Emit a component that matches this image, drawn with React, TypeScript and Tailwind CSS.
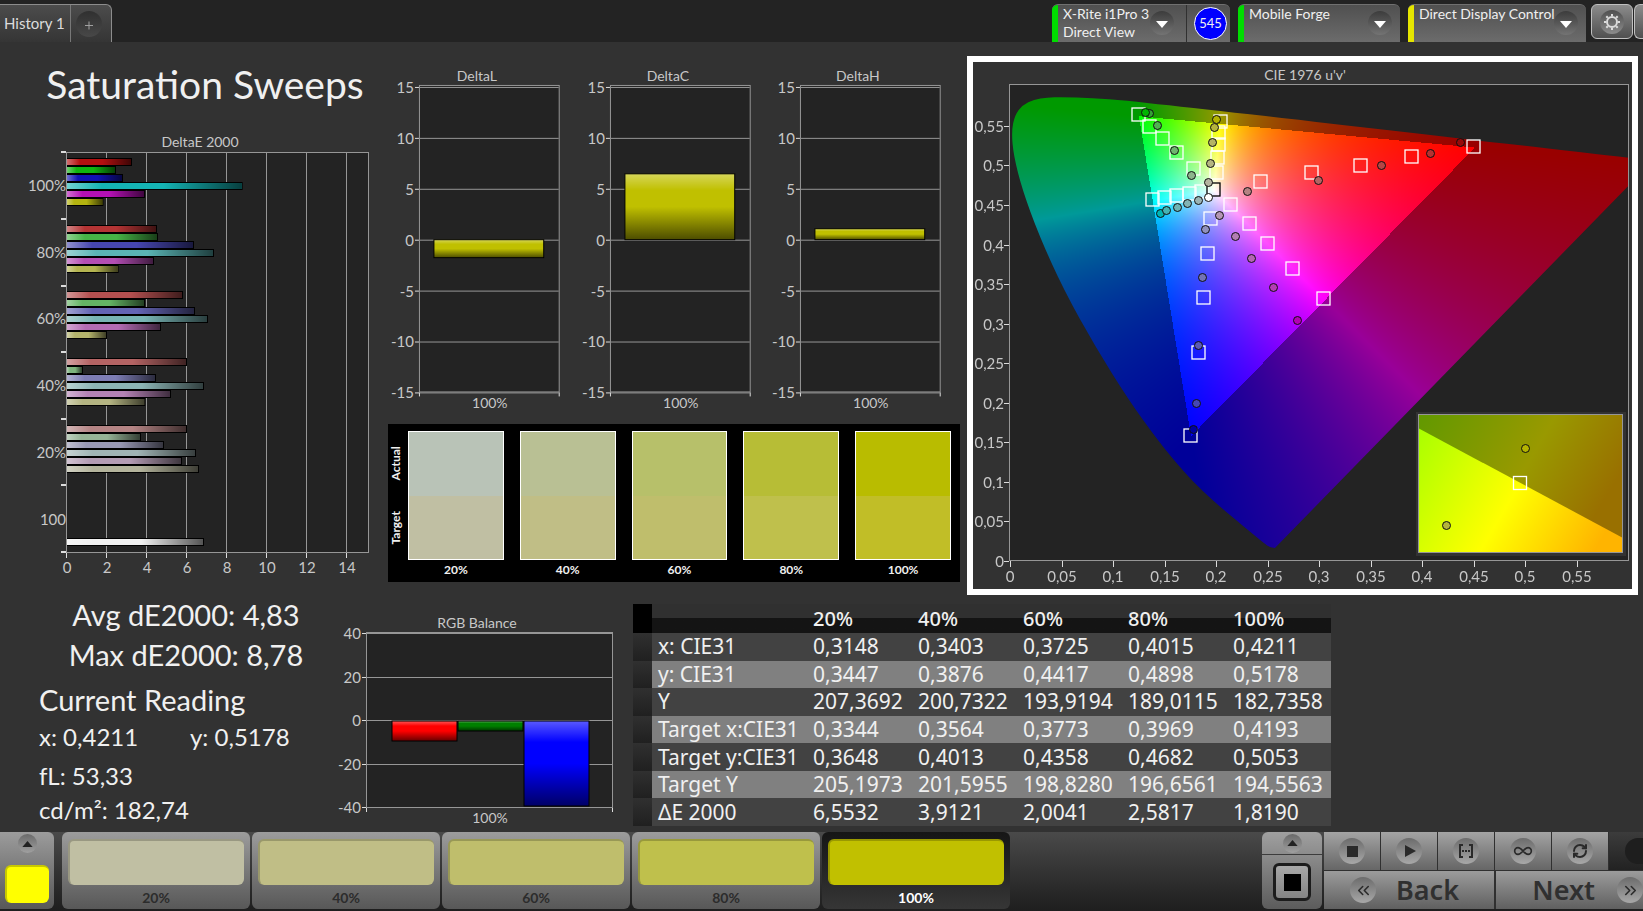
import { useEffect, useRef } from 'react';
import type { ReactNode } from 'react';
import { ChevronsLeft, ChevronsRight, Infinity as InfinityIcon, RefreshCw, Settings } from 'lucide-react';

const SATURATIONS = ['20%', '40%', '60%', '80%', '100%'];

const deltaE = [
  {
    label: '100%',
    bars: [
      { value: 3.25, color: '#b41010' },
      { value: 2.45, color: '#10b410' },
      { value: 2.8, color: '#1010b4' },
      { value: 8.78, color: '#14b4b4' },
      { value: 3.9, color: '#b410b4' },
      { value: 1.82, color: '#b4b410' },
    ],
  },
  {
    label: '80%',
    bars: [
      { value: 4.5, color: '#b43434' },
      { value: 4.55, color: '#46b446' },
      { value: 6.35, color: '#4646b0' },
      { value: 7.35, color: '#5ab4b4' },
      { value: 4.35, color: '#b44eb4' },
      { value: 2.58, color: '#b4b450' },
    ],
  },
  {
    label: '60%',
    bars: [
      { value: 5.8, color: '#b45050' },
      { value: 3.9, color: '#64b464' },
      { value: 6.4, color: '#6464b4' },
      { value: 7.05, color: '#78b4b4' },
      { value: 4.7, color: '#b46cb4' },
      { value: 2, color: '#b4b46c' },
    ],
  },
  {
    label: '40%',
    bars: [
      { value: 6, color: '#b46464' },
      { value: 0.8, color: '#7db47d' },
      { value: 4.45, color: '#7d7db4' },
      { value: 6.85, color: '#8cb4b4' },
      { value: 5.2, color: '#b482b4' },
      { value: 3.91, color: '#b4b482' },
    ],
  },
  {
    label: '20%',
    bars: [
      { value: 6, color: '#b48484' },
      { value: 3.7, color: '#96b496' },
      { value: 4.85, color: '#9898b4' },
      { value: 6.45, color: '#a0b4b4' },
      { value: 5.75, color: '#b49cb4' },
      { value: 6.6, color: '#b4b49c' },
    ],
  },
];

const swatches = [
  { label: '20%', actual: '#b9c3b7', target: '#c0bfa3' },
  { label: '40%', actual: '#b9c094', target: '#c0be86' },
  { label: '60%', actual: '#b7c06a', target: '#bfbe6c' },
  { label: '80%', actual: '#b7bd36', target: '#bfc04c' },
  { label: '100%', actual: '#b9bc00', target: '#c1be27' },
];

const patches = [
  { label: '20%', color: '#c0bfa3' },
  { label: '40%', color: '#c0be86' },
  { label: '60%', color: '#bfbe6c' },
  { label: '80%', color: '#bfc04c' },
  { label: '100%', color: '#c1c000' },
];

const rows = [
  ['x: CIE31', '0,3148', '0,3403', '0,3725', '0,4015', '0,4211'],
  ['y: CIE31', '0,3447', '0,3876', '0,4417', '0,4898', '0,5178'],
  ['Y', '207,3692', '200,7322', '193,9194', '189,0115', '182,7358'],
  ['Target x:CIE31', '0,3344', '0,3564', '0,3773', '0,3969', '0,4193'],
  ['Target y:CIE31', '0,3648', '0,4013', '0,4358', '0,4682', '0,5053'],
  ['Target Y', '205,1973', '201,5955', '198,8280', '196,6561', '194,5563'],
  ['ΔE 2000', '6,5532', '3,9121', '2,0041', '2,5817', '1,8190'],
];

// Spectral locus, CIE 1931 x,y
const locus = [
  [0.1741, 0.005], [0.1714, 0.0051], [0.1689, 0.0069], [0.1644, 0.0109], [0.1566, 0.0177],
  [0.151, 0.0227], [0.144, 0.0297], [0.1355, 0.0399], [0.1241, 0.0578], [0.1096, 0.0868],
  [0.0913, 0.1327], [0.0687, 0.2007], [0.0454, 0.295], [0.0235, 0.4127], [0.0082, 0.5384],
  [0.0039, 0.6548], [0.0139, 0.7502], [0.0389, 0.812], [0.0743, 0.8338], [0.1142, 0.8262],
  [0.1547, 0.8059], [0.2296, 0.7543], [0.3016, 0.6923], [0.3731, 0.6245], [0.4441, 0.5547],
  [0.5125, 0.4866], [0.5752, 0.4242], [0.627, 0.3725], [0.6658, 0.334], [0.6915, 0.3083],
  [0.719, 0.2809], [0.7347, 0.2653],
];

// Marker centres in chart units
const targets = [
  [165, 52], [176, 64], [189, 76], [203, 90], [220, 106],
  [247, 59], [245, 70], [245, 82], [244, 95], [243, 110],
  [179, 137], [191, 135], [203, 133], [216, 131], [228, 129],
  [287, 119], [338, 110], [387, 103], [438, 94], [500, 84],
  [257, 142], [276, 161], [294, 181], [319, 206], [350, 236],
  [237, 156], [234, 191], [230, 235], [225, 290], [217, 373],
];

const readings: [number, number, string][] = [
  [176, 51, '#35a035'], [172, 50, '#00b400'], [184, 63, '#50b450'], [201, 88, '#6eb46e'], [218, 113, '#8cb48c'],
  [243, 57, '#b4b400'], [241, 65, '#b4b43c'], [239, 80, '#b4b464'], [237, 101, '#b4b482'], [235, 120, '#b4b4a0'],
  [187, 151, '#00b4b4'], [193, 148, '#46b4b4'], [204, 145, '#6eb4b4'], [214, 141, '#82b4b4'], [225, 138, '#9ab4b4'],
  [274, 129, '#b48282'], [345, 118, '#b46464'], [408, 103, '#b44646'], [457, 91, '#b43232'], [487, 80, '#960a0a'],
  [246, 153, '#b496b4'], [262, 174, '#b47db4'], [278, 196, '#b464b4'], [300, 225, '#b43cb4'], [324, 258, '#b400b4'],
  [232, 167, '#9191be'], [229, 215, '#7373b4'], [225, 283, '#5a5ab4'], [223, 341, '#4646b4'], [220, 367, '#0000a0'],
  [235, 135, '#ffffff'],
];

const U_MAX = 0.6;
const V_MAX = 0.602;

function Chromaticity() {
  const ref = useRef<HTMLCanvasElement>(null);

  useEffect(() => {
    const canvas = ref.current;
    const ctx = canvas?.getContext('2d');
    if (!canvas || !ctx) return;
    const { width, height } = canvas;
    const image = ctx.createImageData(width, height);
    for (let j = 0; j < height; j++) {
      for (let i = 0; i < width; i++) {
        const u = ((i + 0.5) / width) * U_MAX;
        const v = (1 - (j + 0.5) / height) * V_MAX;
        const d = 6 * u - 16 * v + 12;
        const x = (9 * u) / d;
        const y = (4 * v) / d;
        const X = x / y;
        const Z = (1 - x - y) / y;
        const rgb = [
          3.2406 * X - 1.5372 - 0.4986 * Z,
          -0.9689 * X + 1.8758 + 0.0415 * Z,
          0.0557 * X - 0.204 + 1.057 * Z,
        ];
        const peak = Math.max(rgb[0], rgb[1], rgb[2]);
        const gain = Math.min(rgb[0], rgb[1], rgb[2]) < 0 ? 153 : 255;
        const p = (j * width + i) * 4;
        rgb.forEach((c, k) => {
          image.data[p + k] = gain * Math.max(0, c / peak);
        });
        image.data[p + 3] = 255;
      }
    }
    ctx.putImageData(image, 0, 0);

    // Keep only what lies inside the locus
    const points = locus.map(([x, y]) => {
      const d = -2 * x + 12 * y + 3;
      return [((4 * x) / d / U_MAX) * width, (1 - (9 * y) / d / V_MAX) * height];
    });
    ctx.globalCompositeOperation = 'destination-in';
    ctx.beginPath();
    ctx.moveTo(points[0][0], points[0][1]);
    for (let i = 1; i < points.length - 1; i++) {
      const [x, y] = points[i];
      const [nx, ny] = points[i + 1];
      ctx.quadraticCurveTo(x, y, (x + nx) / 2, (y + ny) / 2);
    }
    ctx.lineTo(points[points.length - 1][0], points[points.length - 1][1]);
    ctx.closePath();
    ctx.fill();
  }, []);

  return <canvas ref={ref} width={619} height={476} className="block w-full h-full" />;
}

function Label({ x, y, anchor = 'middle', children }: { x: number; y: number; anchor?: 'start' | 'middle' | 'end'; children: ReactNode }) {
  return (
    <text x={x} y={y} textAnchor={anchor} className="fill-[#c8c8c8] text-[15px]">
      {children}
    </text>
  );
}

function Caption({ x, y, children }: { x: number; y: number; children: ReactNode }) {
  return (
    <text x={x} y={y} textAnchor="middle" className="fill-[#c8c8c8] text-[14px]">
      {children}
    </text>
  );
}

function ChartGradients() {
  return (
    <svg className="absolute w-0 h-0" aria-hidden="true">
      <defs>
        <linearGradient id="shade-x">
          <stop offset="0" stopColor="#fff" stopOpacity="0.4" />
          <stop offset="0.2" stopColor="#fff" stopOpacity="0" />
          <stop offset="0.55" stopColor="#000" stopOpacity="0" />
          <stop offset="1" stopColor="#000" stopOpacity="0.65" />
        </linearGradient>
        <linearGradient id="shade-y" x2="0" y2="1">
          <stop offset="0" stopColor="#fff" stopOpacity="0.35" />
          <stop offset="0.25" stopColor="#fff" stopOpacity="0" />
          <stop offset="0.5" stopColor="#000" stopOpacity="0" />
          <stop offset="1" stopColor="#000" stopOpacity="0.6" />
        </linearGradient>
      </defs>
    </svg>
  );
}

function DeltaEChart() {
  const px = (value: number) => 67 + value * 20;
  return (
    <svg viewBox="0 0 388 456" className="w-full overflow-visible" role="img" aria-label="DeltaE 2000">
      <Caption x={200} y={17}>DeltaE 2000</Caption>
      <rect x="67" y="22" width="301" height="400" fill="#232323" />
      {[2, 4, 6, 8, 10, 12, 14].map((tick) => (
        <rect key={tick} x={px(tick) - 1} y="22" width="1" height="400" fill="#969696" />
      ))}
      {[0, 2, 4, 6, 8, 10, 12, 14].map((tick) => (
        <g key={tick}>
          <rect x={px(tick) - 1} y="422" width="1" height="6" fill="#dcdcdc" />
          <Label x={px(tick)} y={443}>{tick}</Label>
        </g>
      ))}
      <rect x="66.5" y="22.5" width="302" height="400" fill="none" stroke="#969696" />
      {[22, 89, 156, 222, 289, 355, 422].map((y) => (
        <rect key={y} x="61" y={y - 1} width="5" height="2" fill="#dcdcdc" />
      ))}
      {deltaE.map((group, g) => {
        const top = 28 + Math.round(g * 66.7);
        return (
          <g key={group.label}>
            <Label x={66} y={top + 33} anchor="end">{group.label}</Label>
            {group.bars.map((bar, i) => (
              <g key={bar.color}>
                <rect x="67" y={top + i * 8} width={bar.value * 20} height="8" fill="#000" />
                <rect x="67" y={top + i * 8 + 1} width={bar.value * 20 - 1} height="6" fill={bar.color} />
                <rect x="67" y={top + i * 8 + 1} width={bar.value * 20 - 1} height="6" fill="url(#shade-x)" />
              </g>
            ))}
          </g>
        );
      })}
      <Label x={66} y={395} anchor="end">100</Label>
      <rect x="67" y="408" width="137" height="8" fill="#000" />
      <rect x="67" y="409" width="136" height="6" fill="#f0f0f0" />
      <rect x="67" y="409" width="136" height="6" fill="url(#shade-x)" />
    </svg>
  );
}

function DeltaChart({ title, value }: { title: string; value: number }) {
  const py = (v: number) => 178 - v * 10.2;
  const top = Math.round(py(Math.max(value, 0)));
  const height = Math.round(Math.abs(value) * 10.2);
  return (
    <svg viewBox="0 0 191 350" className="min-w-0 flex-1 overflow-visible" role="img" aria-label={title}>
      <Caption x={89} y={19}>{title}</Caption>
      <rect x="31.5" y="23.5" width="140" height="307" fill="#232323" stroke="#969696" />
      {[15, 10, 5, 0, -5, -10, -15].map((tick) => (
        <g key={tick}>
          <rect x="32" y={Math.round(py(tick))} width="139" height="1" fill="#969696" />
          <rect x="27" y={Math.round(py(tick))} width="4" height="1" fill="#dcdcdc" />
          <Label x={26} y={Math.round(py(tick)) + 6} anchor="end">{tick}</Label>
        </g>
      ))}
      <rect x="31" y="331" width="1" height="4" fill="#dcdcdc" />
      <rect x="171" y="331" width="1" height="4" fill="#dcdcdc" />
      <rect x="46" y={top} width="110" height={height} fill="#c0c000" />
      <rect x="46" y={top} width="110" height={height} fill="url(#shade-y)" stroke="#000" />
      <Caption x={102} y={347}>100%</Caption>
    </svg>
  );
}

function RgbBalance() {
  const bars = [
    { x: 52, height: 20, color: '#ff0000' },
    { x: 118, height: 10, color: '#008000' },
    { x: 184, height: 85, color: '#0000ff' },
  ];
  return (
    <svg viewBox="0 0 293 222" className="w-full overflow-visible" role="img" aria-label="RGB Balance">
      <Caption x={137} y={18}>RGB Balance</Caption>
      <rect x="26.5" y="22.5" width="246" height="175" fill="#232323" stroke="#969696" />
      {[40, 20, 0, -20, -40].map((tick, i) => (
        <g key={tick}>
          <rect x="27" y={23 + Math.round(i * 43.5)} width="245" height="1" fill="#969696" />
          <rect x="22" y={23 + Math.round(i * 43.5)} width="4" height="1" fill="#dcdcdc" />
          <Label x={21} y={29 + Math.round(i * 43.5)} anchor="end">{tick}</Label>
        </g>
      ))}
      <rect x="26" y="198" width="1" height="4" fill="#dcdcdc" />
      <rect x="272" y="198" width="1" height="4" fill="#dcdcdc" />
      {bars.map((bar) => (
        <g key={bar.color}>
          <rect x={bar.x} y="111" width="65" height={bar.height} fill={bar.color} />
          <rect x={bar.x} y="111" width="65" height={bar.height} fill="url(#shade-y)" stroke="#000" />
        </g>
      ))}
      <Caption x={150} y={213}>100%</Caption>
    </svg>
  );
}

function CieChart() {
  const px = (u: number) => 37 + Math.round(u * 1030);
  const py = (v: number) => 499 - Math.round(v * 791);
  const ticks = [0, 5, 10, 15, 20, 25, 30, 35, 40, 45, 50, 55];
  const name = (t: number) => String(t / 100).replace('.', ',');
  return (
    <svg viewBox="0 0 659 527" className="w-full overflow-visible" role="img" aria-label="CIE 1976 u'v'">
      <defs>
        <linearGradient id="zoom-in" gradientUnits="userSpaceOnUse" x1="445" y1="366" x2="630" y2="475">
          <stop offset="0" stopColor="#a8ff00" />
          <stop offset="0.54" stopColor="#ffff00" />
          <stop offset="1" stopColor="#ffb400" />
        </linearGradient>
        <linearGradient id="zoom-out" gradientUnits="userSpaceOnUse" x1="445" y1="366" x2="615" y2="466">
          <stop offset="0" stopColor="#649900" />
          <stop offset="0.57" stopColor="#999900" />
          <stop offset="1" stopColor="#997000" />
        </linearGradient>
      </defs>
      <Caption x={332} y={18}>CIE 1976 u'v'</Caption>
      <rect x="37" y="23" width="619" height="476" fill="#232323" />
      <foreignObject x="37" y="23" width="619" height="476">
        <Chromaticity />
      </foreignObject>
      <rect x="36.5" y="22.5" width="619" height="476" fill="none" stroke="#969696" />
      {ticks.map((t) => (
        <g key={t}>
          <rect x={px(t / 100)} y="499" width="1" height="6" fill="#dcdcdc" />
          <Label x={px(t / 100)} y={520}>{name(t)}</Label>
          <rect x="31" y={py(t / 100)} width="5" height="1" fill="#dcdcdc" />
          <Label x={31} y={py(t / 100) + 6} anchor="end">{name(t)}</Label>
        </g>
      ))}
      {targets.map(([x, y]) => (
        <rect key={`${x}-${y}`} x={x - 6} y={y - 6} width="13" height="13" fill="none" stroke="#fff" strokeWidth="1.3" />
      ))}
      <rect x="234" y="121" width="13" height="13" fill="none" stroke="#000" strokeWidth="1.3" />
      {readings.map(([x, y, color]) => (
        <circle key={`${x}-${y}`} cx={x + 0.5} cy={y + 0.5} r="4" fill={color} stroke="#101010" />
      ))}
      {/* Magnified view of the selected point */}
      <rect x="443" y="350" width="210" height="144" fill="#323232" />
      <rect x="445" y="352" width="205" height="138" fill="url(#zoom-in)" />
      <path d="M445 366V352H650V476Z" fill="url(#zoom-out)" />
      <rect x="445.5" y="352.5" width="204" height="138" fill="none" stroke="#969696" />
      <rect x="540.5" y="414.5" width="13" height="13" fill="none" stroke="#fff" strokeWidth="1.3" />
      <circle cx="552.5" cy="386.5" r="4" fill="#b4b400" stroke="#101010" />
      <circle cx="473.5" cy="463.5" r="4" fill="#b4b43c" stroke="#101010" />
    </svg>
  );
}

function DeviceButton({ stripe, lines, className }: { stripe: string; lines: string[]; className: string }) {
  return (
    <button className={`flex h-full text-left ${className}`}>
      <span className={`w-[6px] h-full shrink-0 ${stripe}`}></span>
      <span className="flex-1 min-w-0 pl-[5px] text-[14px] leading-[18px] text-[#f0f0f0] whitespace-nowrap">
        {lines.map((line) => (
          <span key={line} className="block">{line}</span>
        ))}
      </span>
      <span className="flex w-6 h-6 mt-[6px] mr-2 shrink-0 items-center justify-center rounded-full bg-linear-to-b from-[#3c3c3c] to-[#747474]">
        <svg viewBox="0 0 12 7" className="w-3 h-[7px] mt-[2px]" fill="#fff">
          <path d="M0 0h12L6 7z" />
        </svg>
      </span>
    </button>
  );
}

function Knob({ children }: { children?: ReactNode }) {
  return (
    <span className="flex w-[26px] h-[26px] items-center justify-center rounded-full bg-linear-to-b from-[#6c6c6c] to-[#a8a8a8] text-[#2a2a2a]">
      {children}
    </span>
  );
}

function TransportButton({ label, children }: { label: string; children: ReactNode }) {
  return (
    <button aria-label={label} className="flex w-[56px] h-[38px] items-center justify-center bg-linear-to-b from-[#a4a4a4] to-[#666]">
      <Knob>{children}</Knob>
    </button>
  );
}

function UpArrow() {
  return (
    <span className="flex w-[19px] h-[19px] items-center justify-center rounded-full bg-linear-to-b from-[#6a6a6a] to-[#a0a0a0]">
      <svg viewBox="0 0 12 7" className="w-[11px] h-[6px]" fill="#222">
        <path d="M0 7h12L6 0z" />
      </svg>
    </span>
  );
}

export default function App() {
  return (
    <div className="min-h-screen flex flex-col overflow-hidden bg-[#323232] font-['Lato',sans-serif] text-[#f0f0f0]">
      <ChartGradients />

      {/* Header */}
      <header className="flex h-[42px] justify-between bg-[#232323] pt-1">
        <div className="flex w-[112px] rounded-tr-md border-t border-r border-[#8c8c8c] bg-linear-to-b from-[#4c4c4c] to-[#353535]">
          <button className="w-[71px] border-r border-[#787878] pl-1 text-left text-[15px] text-[#dcdcdc] whitespace-nowrap">History 1</button>
          <button aria-label="Add history" className="ml-[5px] my-auto w-[26px] h-[26px] rounded-full bg-linear-to-b from-[#303030] to-[#484848] text-[#a0a0a0]">
            <svg viewBox="0 0 26 26" stroke="currentColor">
              <path d="M9 14.5h8M13 10.5v8" />
            </svg>
          </button>
        </div>
        <div className="flex">
          <div className="flex w-[178px] mr-[8px] rounded-t-md overflow-hidden border-t border-[#707070] bg-linear-to-b from-[#505050] to-[#6c6c6c]">
            <DeviceButton stripe="bg-[#00dc00]" lines={['X-Rite i1Pro 3', 'Direct View']} className="w-[130px]" />
            <div className="flex flex-1 ml-1 items-center justify-center border-l border-[#303030] pl-1">
              <span className="flex w-[33px] h-[33px] items-center justify-center rounded-full border border-white bg-[#0000ff] text-[13px]">545</span>
            </div>
          </div>
          <div className="mr-[8px] rounded-t-md overflow-hidden border-t border-[#707070] bg-linear-to-b from-[#505050] to-[#6c6c6c]">
            <DeviceButton stripe="bg-[#00dc00]" lines={['Mobile Forge']} className="w-[162px]" />
          </div>
          <div className="mr-[5px] rounded-t-md overflow-hidden border-t border-[#707070] bg-linear-to-b from-[#505050] to-[#6c6c6c]">
            <DeviceButton stripe="bg-[#e6e600]" lines={['Direct Display Control']} className="w-[178px]" />
          </div>
          <button aria-label="Settings" className="flex w-[42px] h-[35px] mr-px items-center justify-center rounded-md border border-[#c0c0c0] bg-linear-to-b from-[#8c8c8c] to-[#505050]">
            <span className="flex w-6 h-6 items-center justify-center rounded-full bg-linear-to-b from-[#505050] to-[#8c8c8c]">
              {/* Eight-toothed gear */}
              <svg viewBox="0 0 18 18" className="w-[18px] h-[18px]" fill="none" stroke="#dcdcdc">
                <circle cx="9" cy="9" r="5" strokeWidth="2" />
                <path d="M9 3V1M9 17v-2M3 9H1M17 9h-2M4.8 4.8L3.3 3.3M14.7 14.7l-1.5-1.5M4.8 13.2l-1.5 1.5M14.7 3.3l-1.5 1.5" strokeWidth="2" />
              </svg>
            </span>
          </button>
          <button aria-label="More" className="w-[9px] h-[35px] rounded-l-md border border-r-0 border-[#c0c0c0] bg-linear-to-b from-[#8c8c8c] to-[#505050]"></button>
        </div>
      </header>

      <main className="flex-1">
        <div className="grid grid-cols-[388fr_572fr_683fr]">
          <section>
            <h1 className="pl-[22px] pt-[14px] text-center text-[39px] leading-[56px] whitespace-nowrap">Saturation Sweeps</h1>
            <div className="pt-[18px]">
              <DeltaEChart />
            </div>
          </section>

          <section className="pt-5">
            <div className="flex">
              <DeltaChart title="DeltaL" value={-1.8} />
              <DeltaChart title="DeltaC" value={6.5} />
              <DeltaChart title="DeltaH" value={1.1} />
            </div>
            <div className="flex h-[158px] mt-[13px] bg-black pt-[7px] pr-[9px] text-[12px] font-bold">
              <div className="flex flex-col w-5 h-[129px]">
                <span className="flex-1 [writing-mode:vertical-rl] rotate-180 text-center leading-4">Actual</span>
                <span className="flex-1 [writing-mode:vertical-rl] rotate-180 text-center leading-4">Target</span>
              </div>
              <div className="flex flex-1 gap-4">
                {swatches.map((swatch) => (
                  <div key={swatch.label} className="flex-1 text-center">
                    <div className="flex flex-col h-[129px] border border-white">
                      <div className="flex-1" style={{ backgroundColor: swatch.actual }}></div>
                      <div className="flex-1" style={{ backgroundColor: swatch.target }}></div>
                    </div>
                    <p className="leading-[20px]">{swatch.label}</p>
                  </div>
                ))}
              </div>
            </div>
          </section>

          <section className="pt-[14px] pl-[7px] pr-[5px]">
            <div className="border-6 border-white">
              <CieChart />
            </div>
          </section>
        </div>

        <div className="grid grid-cols-[340fr_293fr_698fr_312fr]">
          <section className="whitespace-nowrap">
            <div className="pl-8 text-center text-[29px] leading-10">
              <p>Avg dE2000: 4,83</p>
              <p>Max dE2000: 8,78</p>
            </div>
            <div className="pl-[39px] text-[24px] leading-[34px]">
              <h2 className="pt-[5px] text-[29px] leading-10">Current Reading</h2>
              <div className="flex">
                <p className="w-[151px]">x: 0,4211</p>
                <p>y: 0,5178</p>
              </div>
              <p className="pt-[5px]">fL: 53,33</p>
              <p>cd/m²: 182,74</p>
            </div>
          </section>

          <section className="pt-[15px]">
            <RgbBalance />
          </section>

          <section className="pt-[9px]">
            <table className="w-full h-[222px] table-fixed border-collapse text-left font-['Noto_Sans',sans-serif] text-[21px] leading-[27px] whitespace-nowrap">
              <thead>
                <tr className="h-[29px] bg-linear-to-b from-[#303030] from-50% to-[#141414] to-50%">
                  <th className="w-[19px] bg-black"></th>
                  <th className="w-[154px]"></th>
                  {SATURATIONS.map((s) => (
                    <th key={s} scope="col" className="pl-[7px] text-[20px] font-medium">{s}</th>
                  ))}
                </tr>
              </thead>
              <tbody>
                {rows.map(([name, ...values]) => (
                  <tr key={name} className="bg-[#424242] even:bg-[#808080]">
                    <td className="bg-linear-to-b from-[#303030] to-[#202020]"></td>
                    <th scope="row" className="pl-[6px] font-normal">{name}</th>
                    {values.map((value) => (
                      <td key={value} className="pl-[7px]">{value}</td>
                    ))}
                  </tr>
                ))}
              </tbody>
            </table>
          </section>
        </div>
      </main>

      {/* Footer */}
      <footer className="flex h-[79px] pb-[2px] bg-linear-to-b from-[#4a4a4a] to-[#1e1e1e]">
        <button aria-label="Current patch" className="flex flex-col w-[54px] items-center rounded-r-md bg-linear-to-b from-[#9c9c9c] to-[#585858] pt-[2px]">
          <UpArrow />
          <span className="w-11 h-[38px] mt-[12px] rounded-md border-t-2 border-l-2 border-[#c8c800] bg-[#ffff00]"></span>
        </button>
        <div className="flex ml-2 gap-[2px]">
          {patches.map((patch, i) => (
            <button
              key={patch.label}
              className={
                i === 4
                  ? 'w-[188px] rounded-md bg-linear-to-b from-[#161616] to-[#363636] px-[6px] pt-[6px] text-[14px] font-bold text-white'
                  : 'w-[188px] rounded-md bg-linear-to-b from-[#9c9c9c] to-[#585858] px-[6px] pt-[6px] text-[14px] font-bold text-[#2c2c2c]'
              }
            >
              <span className="block h-[46px] rounded-md border-t-2 border-l-2 border-black/20" style={{ backgroundColor: patch.color }}></span>
              <span className="block pt-[3px] leading-[20px]">{patch.label}</span>
            </button>
          ))}
        </div>

        <div className="flex ml-auto">
          <div className="flex flex-col w-[60px] mr-[2px] rounded-md overflow-hidden">
            <button aria-label="Expand" className="flex h-[23px] items-center justify-center border-b border-[#3c3c3c] bg-linear-to-b from-[#a0a0a0] to-[#8c8c8c]">
              <UpArrow />
            </button>
            <button aria-label="Stop" className="flex flex-1 items-center justify-center bg-linear-to-b from-[#8c8c8c] to-[#5c5c5c]">
              <span className="flex w-[38px] h-[38px] items-center justify-center rounded-md border-3 border-[#1c1c1c] bg-linear-to-b from-[#a8a8a8] to-[#848484]">
                <span className="w-[17px] h-[17px] bg-black"></span>
              </span>
            </button>
          </div>
          <div className="w-[319px] bg-[#303030]">
            <div className="flex gap-px">
              <TransportButton label="Stop reading">
                <span className="w-[11px] h-[11px] bg-[#2a2a2a]"></span>
              </TransportButton>
              <TransportButton label="Play">
                <svg viewBox="0 0 11 12" className="w-[11px] h-3 ml-[2px]" fill="currentColor">
                  <path d="M0 0l11 6L0 12z" />
                </svg>
              </TransportButton>
              <TransportButton label="Read range">
                <svg viewBox="0 0 16 14" className="w-4 h-[14px]" fill="none" stroke="currentColor" strokeWidth="2">
                  <path d="M5 1H2v12h3M11 1h3v12h-3" />
                  <path d="M4 7h2M7 7h2M10 7h2" />
                </svg>
              </TransportButton>
              <TransportButton label="Continuous">
                <InfinityIcon className="w-5 h-5" />
              </TransportButton>
              <TransportButton label="Refresh">
                <RefreshCw className="w-4 h-4" strokeWidth={3} />
              </TransportButton>
              <div className="flex flex-1 h-[38px] items-center justify-end overflow-hidden bg-linear-to-b from-[#3c3c3c] to-[#222]">
                <span className="w-[18px] h-[26px] rounded-l-full bg-[#1e1e1e]"></span>
              </div>
            </div>
            <div className="flex h-[38px] mt-px gap-[2px] font-['Noto_Sans',sans-serif] text-[27px] leading-[38px] font-semibold text-[#303030]">
              <button className="flex w-[170px] items-center gap-[20px] bg-linear-to-b from-[#9c9c9c] to-[#606060] pl-[26px]">
                <Knob>
                  <ChevronsLeft className="w-[19px] h-[19px]" />
                </Knob>
                Back
              </button>
              <button className="flex flex-1 items-center justify-end gap-[22px] bg-linear-to-b from-[#9c9c9c] to-[#606060]">
                Next
                <Knob>
                  <ChevronsRight className="w-[19px] h-[19px]" />
                </Knob>
              </button>
            </div>
          </div>
        </div>
      </footer>
    </div>
  );
}
